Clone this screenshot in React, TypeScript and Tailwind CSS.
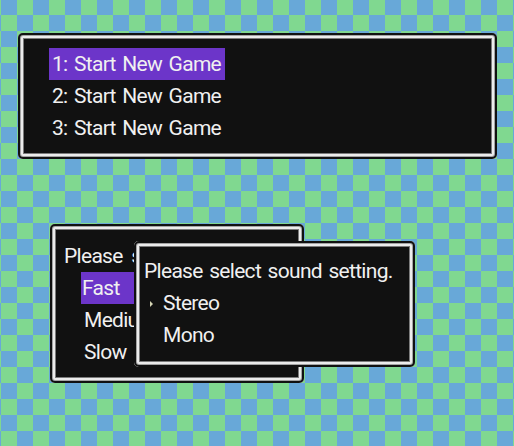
import React from 'react';

/* ── Retro menu windows over a checkered backdrop ── */

const frame =
  'rounded-[5px] bg-[#111111] shadow-[inset_0_0_0_2px_#111111,inset_0_0_0_3px_#a4a4a4,inset_0_0_0_5px_#ececec,inset_0_0_0_6px_#7c7c7c]';

function Item({ label, active, cursor }: { label: string; active?: boolean; cursor?: boolean }) {
  return (
    <div className="relative flex h-8 items-center">
      {cursor && (
        <span className="absolute -left-[10px] top-[14px] h-0 w-0 border-y-[3px] border-l-[3px] border-y-transparent border-l-[#d4d4b4]" />
      )}
      <span
        className={`flex h-8 items-center whitespace-nowrap pl-[3px] pr-2 ${active ? 'w-[176px] bg-[#6c35c9]' : ''}`}
      >
        {label}
      </span>
    </div>
  );
}

export default function App() {
  return (
    <div
      className="relative h-[446px] w-[514px] overflow-hidden bg-[conic-gradient(#80d890_0deg_90deg,#68a8d8_90deg_180deg,#80d890_180deg_270deg,#68a8d8_270deg_360deg)] bg-size-[32px_32px] bg-position-[1px_-1px] pt-[33px] text-[21px] leading-none tracking-[-0.7px] [word-spacing:2px] text-[#f0f0f0]"
      style={{ fontFamily: 'Roboto, "Liberation Sans", sans-serif' }}
    >
      {/* Save slots */}
      <div className={`ml-[18px] h-[126px] w-[479px] pl-[31px] pt-[15px] ${frame}`}>
        <Item label="1: Start New Game" active />
        <Item label="2: Start New Game" />
        <Item label="3: Start New Game" />
      </div>

      {/* Speed window */}
      <div className={`relative ml-[50px] mt-[65px] h-[159px] w-[254px] pl-[14px] pt-4 ${frame}`}>
        <div className="flex h-8 items-center whitespace-nowrap [word-spacing:4px]">Please select speed.</div>
        <div className="ml-[17px]">
          <div className="flex h-8 items-center">
            <span className="flex h-8 w-[110px] items-center bg-[#6c35c9] pl-[1px]">Fast</span>
          </div>
          <Item label="Medium" />
          <Item label="Slow" />
        </div>

        {/* Sound window, laid over the speed window */}
        <div className={`absolute left-[84px] top-[17px] h-[126px] w-[281px] pl-[10px] pt-[14px] ${frame}`}>
          <div className="flex h-8 items-center whitespace-nowrap">Please select sound setting.</div>
          <div className="ml-4">
            <Item label="Stereo" cursor />
            <Item label="Mono" />
          </div>
        </div>
      </div>
    </div>
  );
}
